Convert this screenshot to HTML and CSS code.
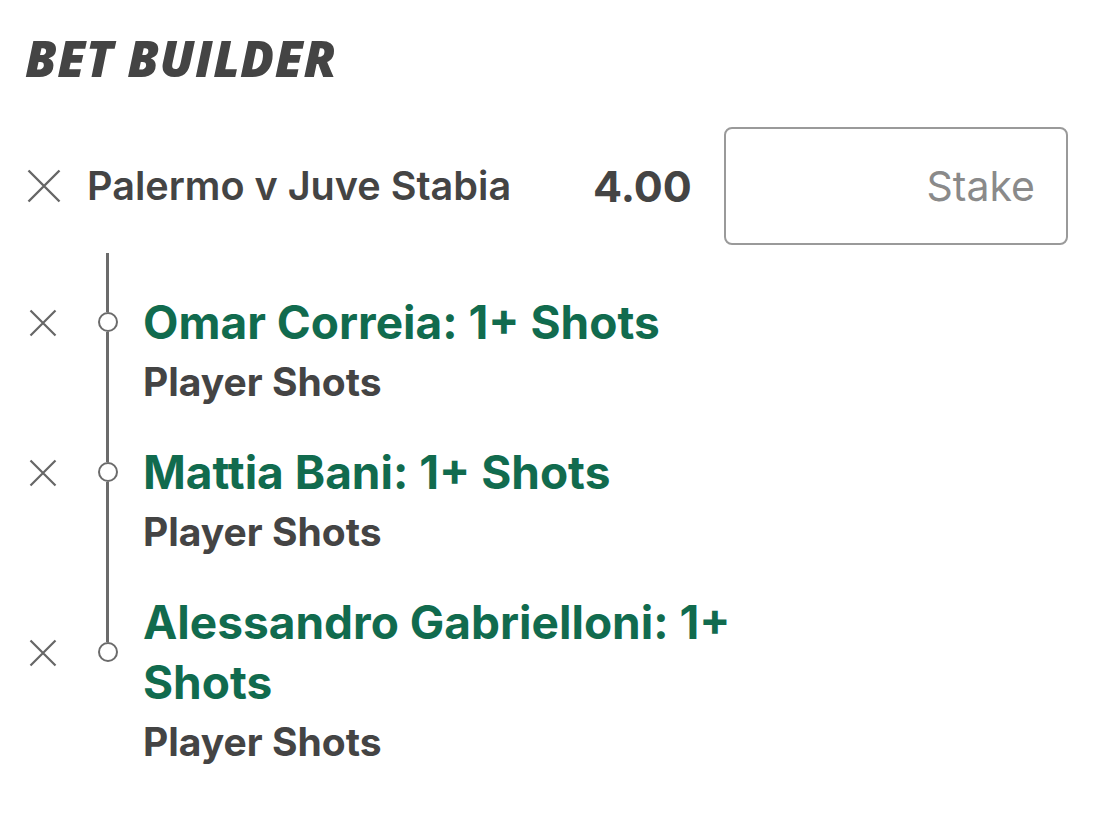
FILE: index.html
```html
<!DOCTYPE html>
<html lang="en">
<head>
<meta charset="utf-8">
<title>Bet Builder</title>
<link rel="stylesheet" href="styles.css">
</head>
<body>
<main class="slip">
  <h1 class="slip-title">BET BUILDER</h1>
  <div class="event-row">
    <button class="remove remove-lg" aria-label="Remove">
      <svg viewBox="0 0 34 34" width="34" height="34"><path d="M1.5 1.5 L32.5 32.5 M32.5 1.5 L1.5 32.5" stroke="#666" stroke-width="2.4" fill="none"/></svg>
    </button>
    <div class="event-name">Palermo v Juve Stabia</div>
    <div class="odds">4.00</div>
    <div class="stake">Stake</div>
  </div>
  <div class="legs">
    <div class="leg">
      <span class="rail rail-pad"></span>
      <button class="remove remove-sm" aria-label="Remove">
        <svg viewBox="0 0 28 28" width="28" height="28"><path d="M1.5 1.5 L26.5 26.5 M26.5 1.5 L1.5 26.5" stroke="#666" stroke-width="2.2" fill="none"/></svg>
      </button>
      <span class="rail-title"><span class="seg"></span><span class="dot"></span><span class="seg seg-after"></span></span>
      <div class="leg-title">Omar Correia: 1+ Shots</div>
      <span class="rail rail-market"></span>
      <div class="leg-market">Player Shots</div>
    </div>
    <div class="leg">
      <span class="rail rail-pad"></span>
      <button class="remove remove-sm" aria-label="Remove">
        <svg viewBox="0 0 28 28" width="28" height="28"><path d="M1.5 1.5 L26.5 26.5 M26.5 1.5 L1.5 26.5" stroke="#666" stroke-width="2.2" fill="none"/></svg>
      </button>
      <span class="rail-title"><span class="seg"></span><span class="dot"></span><span class="seg seg-after"></span></span>
      <div class="leg-title">Mattia Bani: 1+ Shots</div>
      <span class="rail rail-market"></span>
      <div class="leg-market">Player Shots</div>
    </div>
    <div class="leg">
      <span class="rail rail-pad"></span>
      <button class="remove remove-sm" aria-label="Remove">
        <svg viewBox="0 0 28 28" width="28" height="28"><path d="M1.5 1.5 L26.5 26.5 M26.5 1.5 L1.5 26.5" stroke="#666" stroke-width="2.2" fill="none"/></svg>
      </button>
      <span class="rail-title"><span class="seg"></span><span class="dot"></span><span class="seg seg-after"></span></span>
      <div class="leg-title">Alessandro Gabrielloni: 1+ Shots</div>
      <span class="rail rail-market"></span>
      <div class="leg-market">Player Shots</div>
    </div>
  </div>
</main>
</body>
</html>
```
FILE: styles.css
```css
* { box-sizing: border-box; }
html, body { margin: 0; padding: 0; background: #fff; }
body {
  font-family: Inter, "Noto Sans", sans-serif;
  color: #444;
  width: 1096px;
  height: 814px;
  overflow: hidden;
}
.slip { padding: 0 28px 0 25px; }
.slip-title {
  margin: 0;
  padding-top: 24px;
  height: 127px;
  font-family: "Open Sans", sans-serif;
  font-style: italic;
  font-weight: 800;
  font-size: 50px;
  line-height: 68px;
  letter-spacing: 0.5px;
  color: #444;
}
.event-row {
  display: flex;
  align-items: center;
  height: 118px;
}
.remove {
  border: 0;
  background: none;
  padding: 0;
  display: flex;
  align-items: center;
  justify-content: center;
}
.remove-lg { width: 36px; margin-left: 1px; }
.event-name {
  margin-left: 25px;
  font-size: 39.6px;
  font-weight: 600;
  width: 506px;
  color: #444;
}
.odds {
  font-size: 43px;
  font-weight: 700;
  color: #444;
  width: 131px;
}
.stake {
  width: 344px;
  height: 118px;
  border: 2.5px solid #9a9a9a;
  border-radius: 8px;
  display: flex;
  align-items: center;
  justify-content: flex-end;
  padding-right: 31px;
  font-size: 41px;
  color: #8a8a8a;
}
.legs { display: flex; flex-direction: column; padding-top: 8px; }
.leg {
  display: grid;
  grid-template-columns: 36px 70px 660px;
  grid-template-rows: 31px auto auto;
}
.leg:first-child { grid-template-rows: 39px auto auto; }
.remove-sm {
  grid-column: 1;
  grid-row: 2;
  align-self: center;
  height: 30px;
  margin-top: 2px;
}
.rail {
  grid-column: 2;
  justify-self: start;
  width: 2.5px;
  margin-left: 45.25px;
  background: #6b6b6b;
}
.rail-pad { grid-row: 1; }
.rail-market { grid-row: 3; }
.rail-title {
  grid-column: 2;
  grid-row: 2;
  justify-self: start;
  width: 20px;
  margin-left: 36.5px;
  display: flex;
  flex-direction: column;
  align-items: center;
}
.seg { width: 2.5px; flex: 1; background: #6b6b6b; }
.dot {
  width: 20px; height: 20px;
  border: 2.5px solid #6b6b6b;
  border-radius: 50%;
  background: #fff;
  flex: none;
}
.leg:last-child .seg-after,
.leg:last-child .rail-market { background: transparent; }
.leg-title {
  grid-column: 3;
  grid-row: 2;
  margin-left: 12px;
  font-size: 46px;
  font-weight: 700;
  line-height: 60px;
  color: #116b4e;
}
.leg-market {
  grid-column: 3;
  grid-row: 3;
  margin-left: 12px;
  font-size: 39px;
  font-weight: 700;
  line-height: 59px;
  color: #444;
}
```
